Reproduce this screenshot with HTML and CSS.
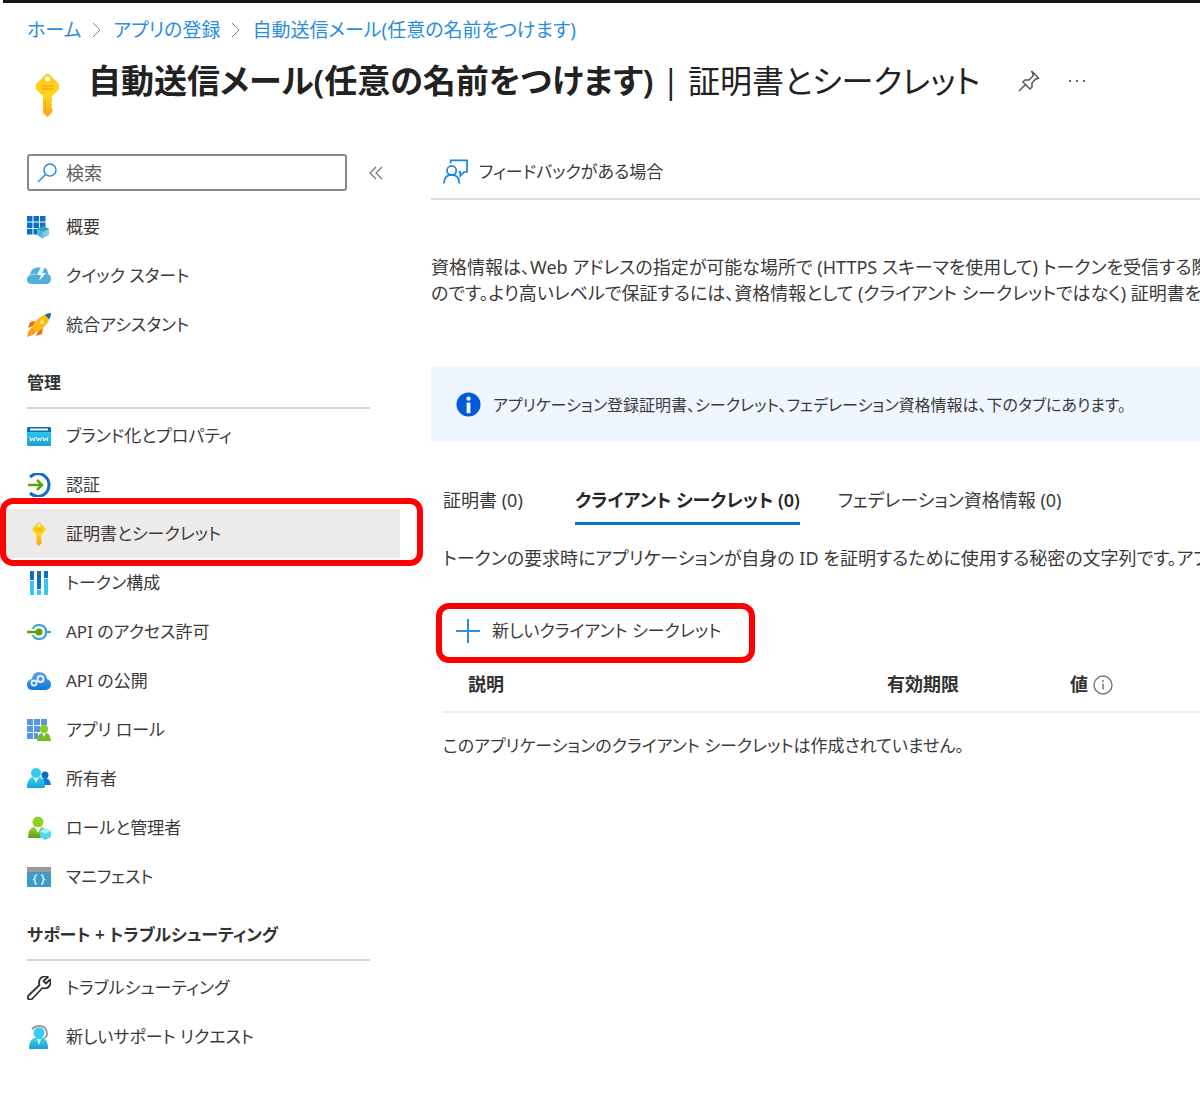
FILE: index.html
```html
<!DOCTYPE html>
<html lang="ja">
<head>
    <meta charset="UTF-8">
    <meta name="viewport" content="width=device-width, initial-scale=1.0">
    <title>証明書とシークレット</title>
    <link rel="stylesheet" href="styles.css">
</head>
<body>
    <svg class="defs" width="0" height="0" aria-hidden="true">
        <defs>
            <linearGradient id="gold" x1="0" y1="0" x2="0" y2="1"><stop offset="0" stop-color="#ffc61a"/><stop offset="0.5" stop-color="#ffd616"/><stop offset="1" stop-color="#fea11b"/></linearGradient>
            <linearGradient id="cyan" x1="0" y1="0" x2="0" y2="1"><stop offset="0" stop-color="#32d4f5"/><stop offset="1" stop-color="#1ba0d0"/></linearGradient>
            <linearGradient id="green" x1="0" y1="0" x2="0" y2="1"><stop offset="0" stop-color="#9bd52a"/><stop offset="1" stop-color="#5f9f18"/></linearGradient>
            <linearGradient id="blue" x1="0" y1="0" x2="0" y2="1"><stop offset="0" stop-color="#5ea0ef"/><stop offset="1" stop-color="#0f78d8"/></linearGradient>
            <symbol id="key" viewBox="0 0 24 44">
                <path d="M10 1.5Q12 0 14 1.5L23 10.500Q25 14 23 17L16.500 23V26L17 28L15.500 30L17 32L15.500 34L17 36V39L12 44L7.500 40V23L1 17Q-1 14 1 10.500Z" fill="url(#gold)"/>
                <circle cx="12" cy="6" r="2.500" fill="#fff"/>
                <path d="M6 12.500h12v1.800H6zM6 15.300h12v1.700H6z" fill="#f5ad12"/>
                <path d="M10 26v12" stroke="#f7a818" stroke-width="1"/>
            </symbol>
        </defs>
    </svg>
    <div class="top-bar"></div>
    <header>
        <nav class="breadcrumb" aria-label="階層">
            <a href="#">ホーム</a>
            <svg viewBox="0 0 10 16"><path d="M1 1l7 7-7 7"/></svg>
            <a href="#">アプリの登録</a>
            <svg viewBox="0 0 10 16"><path d="M1 1l7 7-7 7"/></svg>
            <a href="#">自動送信メール(任意の名前をつけます)</a>
        </nav>
        <div class="title-row">
            <svg class="title-key" viewBox="0 0 24 44"><use href="#key"/></svg>
            <h1>自動送信メール(任意の名前をつけます) <span>| 証明書とシークレット</span></h1>
            <button class="icon-button pin" type="button" aria-label="ピン留め">
                <svg viewBox="0 0 22 22"><path d="M13.500 1l7 7-2 1-1 0-3.500 4 0 4-2 2-7-7 2-2 4 0 4-4 0-2zM7.500 14.500L1 21" fill="none" stroke="#555" stroke-width="1.500"/></svg>
            </button>
            <button class="icon-button more" type="button" aria-label="その他">
                <svg viewBox="0 0 18 4"><path d="M1 1h2v2H1zM8 1h2v2H8zM15 1h2v2h-2z" fill="#666"/></svg>
            </button>
        </div>
    </header>

    <div class="layout">
        <aside>
            <div class="search-row">
                <div class="search-box">
                    <svg viewBox="0 0 20 20"><circle cx="13" cy="7" r="6"/><path d="M8.500 11.500L1 19"/></svg>
                    <input type="search" placeholder="検索" aria-label="検索">
                </div>
                <button class="icon-button collapse" type="button" aria-label="折りたたむ">
                    <svg viewBox="0 0 14 14"><path d="M7 1L1 7l6 6M13 1L7 7l6 6" fill="none" stroke="#777" stroke-width="1.300"/></svg>
                </button>
            </div>
            <nav class="menu">
                <a href="#">
                    <svg viewBox="0 0 24 24"><path d="M0 1h5.500v5.500H0zM6.500 1H12v5.500H6.500zM13 1h5.500v5.500H13zM0 7.500h5.500V13H0zM6.500 7.500H12V13H6.500zM13 7.500h5.500V13H13zM0 14h5.500v5.500H0zM6.500 14H12v5.500H6.500z" fill="#0a6fcb"/><path d="M16 11l6 3v6l-6 3.500-6-3.500v-6z" fill="#83cbe8"/><path d="M16 11l6 3-6 3-6-3z" fill="#2f9cb8"/><path d="M10 14l6 3v6.500l-6-3.500z" fill="#58b5dc"/></svg>
                    概要
                </a>
                <a href="#">
                    <svg viewBox="0 0 24 24"><path d="M5 20Q0 20 0 15.500 0 12 3 11 4 4 10 3.500h8q3 2 3 6.500 3 1 3 5t-4 5z" fill="#50b0dc"/><path d="M14 3L10 11h4l-2 6 7-8h-4l3-6z" fill="#fff"/><path d="M3 11l6-1" stroke="#8fd0ed" stroke-width="1.500"/></svg>
                    クイック スタート
                </a>
                <a href="#">
                    <svg viewBox="0 0 24 24"><path d="M9 8L3 9l-2 6 5-2zM16 15l-1 6-6 2 2-5z" fill="#f56b12"/><path d="M5 14L1 19l-1 5 6-2 4-4z" fill="#ff9c1c"/><path d="M5 15Q9 5 19 1l4 4Q19 15 9 19z" fill="#fdbd10"/><path d="M18 2Q20 0 24 0q0 4-2 6z" fill="#0a65b5"/><circle cx="15" cy="9" r="2" fill="#ffe37b"/></svg>
                    統合アシスタント
                </a>
                <h2>管理</h2>
                <a href="#">
                    <svg viewBox="0 0 24 24"><rect y="3" width="24" height="19" rx="1" fill="url(#cyan)"/><path d="M1 3h22l1 1v4H0V4z" fill="#0a6fb8"/><path d="M3 4.500h18v2H3z" fill="#fff"/><path d="M3 13l1 4 1.500-3L7 17l1-4M9.500 13l1 4 1.500-3 1.500 3 1-4M16 13l1 4 1.500-3 1.500 3 1-4" fill="none" stroke="#fff" stroke-width="1"/></svg>
                    ブランド化とプロパティ
                </a>
                <a href="#">
                    <svg viewBox="0 0 24 24"><path d="M3 4Q10-2 17 2.500 22 6 22 12T17 21.500Q10 26 3 20" fill="none" stroke="#0f6fc9" stroke-width="3"/><path d="M1 12h14M10 7l5 5-5 5" fill="none" stroke="#5aa50c" stroke-width="2.500"/></svg>
                    認証
                </a>
                <a class="selected" href="#" aria-current="page">
                    <svg viewBox="0 0 24 24"><use href="#key" x="4" y="0" width="16" height="24"/></svg>
                    証明書とシークレット
                </a>
                <a href="#">
                    <svg viewBox="0 0 24 24"><path d="M3 0h4v9H3zM10 0h4v18h-4zM17 0h4v7h-4z" fill="#0a70cb"/><path d="M3 10h4v14H3zM10 19h4v5h-4zM17 8h4v16h-4z" fill="#35c7ee"/></svg>
                    トークン構成
                </a>
                <a href="#">
                    <svg viewBox="0 0 24 24"><path d="M6 9Q7 5 12 5q7 0 7 7t-7 7q-5 0-6-4M19 12h5" fill="none" stroke="#399fc9" stroke-width="2"/><path d="M0 12h11" stroke="#57a300" stroke-width="2.500"/><circle cx="12" cy="12" r="3.500" fill="#57a300"/></svg>
                    API のアクセス許可
                </a>
                <a href="#">
                    <svg viewBox="0 0 24 24"><path d="M6 21Q0 21 0 15.500 0 11 5 10 6 3 12 3q7 0 8 7 4 1 4 5.500T19 21z" fill="url(#blue)"/><circle cx="7" cy="14" r="2.500" fill="none" stroke="#e8f2fc" stroke-width="1.800"/><circle cx="13.500" cy="10" r="3" fill="none" stroke="#e8f2fc" stroke-width="2"/></svg>
                    API の公開
                </a>
                <a href="#">
                    <svg viewBox="0 0 24 24"><path d="M0 1h6v6H0zM7 1h6v6H7zM14 1h6v6h-6zM0 8h6v6H0zM7 8h6v6H7zM0 15h6v6H0zM7 15h4v6H7z" fill="#5795e8"/><circle cx="17" cy="11" r="4" fill="#7fcf21"/><path d="M10 23q1-8 5-8l2 4 2-4q4 0 5 8z" fill="#76bd1d"/></svg>
                    アプリ ロール
                </a>
                <a href="#">
                    <svg viewBox="0 0 24 24"><circle cx="18" cy="8" r="3.500" fill="#0a6cc8"/><path d="M14 18q0-7 4-7 5 0 6 7z" fill="#0f78d4"/><circle cx="9" cy="6" r="5" fill="#32c8ef"/><path d="M0 21q0-10 6-11l3 5 3-5q6 1 6 10l-1 1z" fill="url(#cyan)"/><path d="M7 11h4l-2 5z" fill="#fff"/></svg>
                    所有者
                </a>
                <a href="#">
                    <svg viewBox="0 0 24 24"><circle cx="11" cy="6" r="5.500" fill="#91cf27"/><path d="M1 22q0-11 7-11l3 5 3-5q6 1 6 10l-1 1z" fill="url(#green)"/><path d="M8 11h6l-3 6z" fill="#fff"/><path d="M18 12l6 3v6l-6 3-5-3v-6z" fill="#50d8ef"/><path d="M18 12l6 3-6 3-5-3z" fill="#a7f0fa"/></svg>
                    ロールと管理者
                </a>
                <a href="#">
                    <svg viewBox="0 0 24 24"><path d="M0 2h24v20H0z" fill="#419bc7"/><path d="M0 2h24v5H0z" fill="#999"/><path d="M10 10q-2 0-2 2t-1 2.500q1 .5 1 2.500t2 2M14 10q2 0 2 2t1 2.500q-1 .5-1 2.500t-2 2" fill="none" stroke="#d5edf8" stroke-width="1.500"/></svg>
                    マニフェスト
                </a>
                <h2>サポート + トラブルシューティング</h2>
                <a href="#">
                    <svg viewBox="0 0 24 24"><path d="M21 1Q15-1 12.500 4q-1 3 0 5L1.500 19.500q-1.500 2 0 3.500t3.500 0L15.500 12q5 1.500 7.500-3 1-3 0-5.500L19 7.500 16.500 5z" fill="none" stroke="#333" stroke-width="1.800" stroke-linejoin="round"/></svg>
                    トラブルシューティング
                </a>
                <a href="#">
                    <svg viewBox="0 0 24 24"><path d="M5 4Q8 1 12 1q8 0 8 8 0 3-3 4" fill="none" stroke="#999" stroke-width="1.800"/><circle cx="12" cy="8" r="5.500" fill="#32d0f3"/><path d="M2 24q0-10 6-11h8q5 1 5 11z" fill="url(#cyan)"/><path d="M10 14h4l-2 6z" fill="#fff"/></svg>
                    新しいサポート リクエスト
                </a>
            </nav>
        </aside>

        <main>
            <div class="toolbar">
                <button type="button">
                    <svg viewBox="0 0 26 26"><path d="M8 4V1h17v12h-3l-4 4v-4h-2M1 25q0-9 8-9t8 9" fill="none" stroke="#1b86dc" stroke-width="1.800"/><circle cx="9" cy="11.500" r="4.800" fill="none" stroke="#1b86dc" stroke-width="1.800"/></svg>
                    フィードバックがある場合
                </button>
            </div>
            <p class="intro">資格情報は、Web アドレスの指定が可能な場所で (HTTPS スキーマを使用して) トークンを受信する際<br>のです。より高いレベルで保証するには、資格情報として (クライアント シークレットではなく) 証明書を使</p>
            <div class="notice">
                <svg viewBox="0 0 26 26"><circle cx="13" cy="13" r="12.500" fill="#015cda"/><circle cx="13" cy="7" r="2.200" fill="#fff"/><path d="M11 11h4v11h-4z" fill="#fff"/></svg>
                アプリケーション登録証明書、シークレット、フェデレーション資格情報は、下のタブにあります。
            </div>
            <section class="secrets">
                <div class="tabs" role="tablist">
                    <button type="button" role="tab">証明書 (0)</button>
                    <button class="active" type="button" role="tab" aria-selected="true">クライアント シークレット (0)</button>
                    <button type="button" role="tab">フェデレーション資格情報 (0)</button>
                </div>
                <p class="description">トークンの要求時にアプリケーションが自身の ID を証明するために使用する秘密の文字列です。アプ</p>
                <button class="new-secret" type="button">
                    <svg viewBox="0 0 24 24"><path d="M12 0v24M0 12h24" stroke="#2b8fdf" stroke-width="2"/></svg>
                    新しいクライアント シークレット
                </button>
                <table>
                    <thead>
                        <tr>
                            <th class="col-name">説明</th>
                            <th class="col-date">有効期限</th>
                            <th>値 <svg viewBox="0 0 20 20"><circle cx="10" cy="10" r="9" fill="none" stroke="#777" stroke-width="1.400"/><path d="M10 5v2M10 8.500v6" stroke="#777" stroke-width="1.500"/></svg></th>
                        </tr>
                    </thead>
                    <tbody>
                        <tr>
                            <td colspan="3">このアプリケーションのクライアント シークレットは作成されていません。</td>
                        </tr>
                    </tbody>
                </table>
            </section>
        </main>
    </div>
</body>
</html>
```
FILE: styles.css
```css
* {
    box-sizing: border-box;
}

body {
    margin: 0;
    background: #fff;
    color: #3b3a39;
    font-family: "Noto Sans", "Noto Sans CJK JP", sans-serif;
    font-feature-settings: "palt";
    font-size: 17px;
    line-height: 26px;
    overflow-x: hidden;
}

a {
    color: inherit;
    text-decoration: none;
}

button {
    padding: 0;
    border: none;
    background: none;
    color: inherit;
    font: inherit;
    font-feature-settings: inherit;
    cursor: pointer;
}

svg {
    flex: none;
}

.defs {
    position: absolute;
}

.top-bar {
    height: 3px;
    margin-left: 3px;
    background: #161616;
}

/* page header */
.breadcrumb {
    display: flex;
    align-items: center;
    gap: 11px;
    padding: 14px 27px 0;
    color: #2b8ddb;
    font-size: 19px;
    white-space: nowrap;
}

.breadcrumb svg {
    width: 10px;
    height: 16px;
    fill: none;
    stroke: #888;
}

.title-row {
    display: flex;
    align-items: center;
    padding: 0 0 2px 34px;
    height: 77px;
    white-space: nowrap;
}

.title-key {
    width: 27px;
    height: 44px;
    margin-top: 28px;
}

h1 {
    margin: 0 0 0 27px;
    color: #222;
    font-size: 33px;
    font-weight: 600;
    line-height: 44px;
}

h1 span {
    font-size: 32px;
    font-weight: 400;
}

.icon-button {
    display: flex;
}

.pin {
    margin-left: 38px;
}

.pin svg {
    width: 22px;
    height: 22px;
}

.more {
    margin-left: 28px;
}

.more svg {
    width: 18px;
    height: 4px;
}

.layout {
    display: flex;
    align-items: flex-start;
    padding-top: 34px;
}

/* left menu */
aside {
    flex: none;
    width: 400px;
}

.search-row {
    display: flex;
    align-items: center;
    gap: 22px;
    padding-left: 27px;
}

.search-box {
    display: flex;
    align-items: center;
    width: 320px;
    height: 37px;
    padding: 0 8px;
    border: 2px solid #8a8886;
    border-radius: 3px;
}

.search-box svg {
    width: 20px;
    height: 20px;
    fill: none;
    stroke: #2b8ddb;
    stroke-width: 1.5;
}

.search-box input {
    flex: 1;
    min-width: 0;
    margin-left: 9px;
    padding: 0;
    border: none;
    outline: none;
    background: none;
    font: inherit;
    font-size: 18px;
}

.search-box input::placeholder {
    color: #605e5c;
    opacity: 1;
}

.collapse svg {
    width: 14px;
    height: 14px;
}

.menu {
    padding-top: 11px;
}

.menu a {
    display: flex;
    align-items: center;
    gap: 15px;
    height: 49px;
    padding-left: 27px;
}

.menu a svg {
    width: 24px;
    height: 24px;
}

.menu h2 {
    margin: 0 30px 2px 27px;
    padding: 22px 0 12px;
    border-bottom: 2px solid #d6d6d6;
    color: #333;
    font-size: 17px;
    font-weight: 600;
    line-height: 24px;
}

.menu .selected {
    position: relative;
    background: #edebe9;
}

/* red marker around the selected entry */
.menu .selected::after {
    content: "";
    position: absolute;
    top: -11px;
    right: -23px;
    bottom: -8px;
    left: 0;
    border: 6px solid #f00;
    border-radius: 13px;
}

/* content */
main {
    flex: 1;
    min-width: 0;
    margin-left: 31px;
    overflow: hidden;
    white-space: nowrap;
}

.toolbar {
    padding: 5px 0 13px 12px;
    border-bottom: 2px solid #ddd;
}

.toolbar button {
    display: flex;
    align-items: center;
    gap: 11px;
}

.toolbar svg {
    width: 25px;
    height: 26px;
}

.intro {
    margin: 54px 0 0;
    font-size: 18px;
}

.notice {
    display: flex;
    align-items: center;
    gap: 12px;
    height: 75px;
    margin-top: 61px;
    padding-left: 25px;
    background: #eff6ff;
    font-size: 16px;
}

.notice svg {
    width: 25px;
    height: 25px;
}

.secrets {
    padding-left: 12px;
}

.tabs {
    display: flex;
    gap: 38px;
    margin-top: 45px;
    font-size: 18px;
}

.tabs button {
    min-width: 94px;
    padding-bottom: 9px;
    border-bottom: 3px solid transparent;
    text-align: left;
}

.tabs .active {
    border-color: #0f73d6;
    color: #292827;
    font-weight: 600;
}

.description {
    margin: 20px 0 0;
    font-size: 18px;
}

.new-secret {
    display: flex;
    align-items: center;
    gap: 12px;
    height: 60px;
    margin: 32px 0 0 -7px;
    padding: 0 28px 4px 14px;
    border: 6px solid #f00;
    border-radius: 13px;
}

.new-secret svg {
    width: 24px;
    height: 24px;
}

table {
    width: 100%;
    border-collapse: collapse;
}

th {
    padding: 8px 0 14px;
    border-bottom: 2px solid #eee;
    color: #323130;
    font-size: 18px;
    font-weight: 600;
    text-align: left;
}

th svg {
    width: 20px;
    height: 20px;
    vertical-align: -4px;
}

.col-name {
    width: 444px;
    padding-left: 25px;
}

.col-date {
    width: 183px;
}

td {
    padding: 20px 0;
}
```
